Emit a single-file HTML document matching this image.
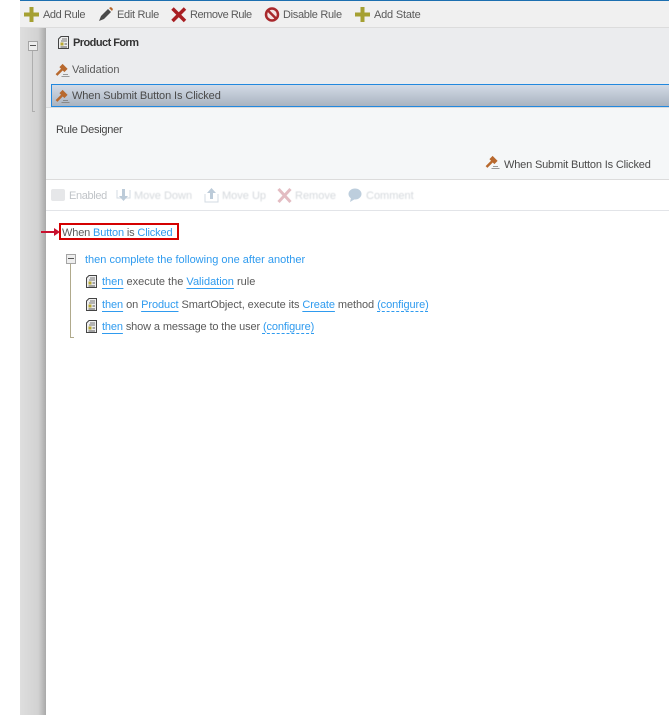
<!DOCTYPE html>
<html><head><meta charset="utf-8"><style>
html,body{margin:0;padding:0;background:#fff}
body{width:669px;height:715px;position:relative;overflow:hidden;font-family:"Liberation Sans",sans-serif;font-size:11px;color:#5a5a5a}
.a{position:absolute}
.t{position:absolute;white-space:nowrap;line-height:14px;letter-spacing:0}
.b{color:#2f9bef}
.u,.d{color:#2f9bef;text-decoration:underline;text-decoration-color:#2f9bef;text-decoration-thickness:1px;text-underline-offset:3px;text-decoration-skip-ink:none}
.d{text-decoration-style:dashed}
svg{position:absolute;overflow:visible}
.dis{color:#d4d8dc;filter:blur(.5px)}
</style></head><body>
<div class="a" style="left:20px;top:27px;width:26px;height:688px;background:linear-gradient(90deg,#dedede 0,#d2d2d2 70%,#b4b4b4 92%,#a8a8a8 100%)"></div>
<div class="a" style="left:20px;top:0;width:649px;height:28px;background:#f0f0f0;border-bottom:1px solid #dcdcdc;box-sizing:border-box"></div>
<div class="a" style="left:20px;top:0;width:649px;height:1px;background:#1c6fb0"></div>
<div class="a" style="left:46px;top:28px;width:623px;height:56px;background:#ebecee"></div>
<div class="a" style="left:46px;top:84px;width:5px;height:23px;background:#ebecee"></div>
<div class="a" style="left:51px;top:84px;width:618px;height:23px;box-sizing:border-box;border:1px solid #2288de;border-right:0;background:linear-gradient(#d3dbe6,#a9b3c0)"></div>
<div class="a" style="left:46px;top:107px;width:623px;height:73px;background:#f5f7f8;border-top:1px solid #d9dbdd;box-sizing:border-box"></div>
<div class="a" style="left:46px;top:179px;width:623px;height:1px;background:#dcdcdc"></div>
<div class="a" style="left:46px;top:210px;width:623px;height:1px;background:#e2e4e8"></div>

<svg style="left:24px;top:7px" width="15" height="15"><path d="M5.500 0h4v5.500H15v4H9.500V15h-4V9.500H0v-4h5.500z" fill="#a5a032"/></svg>
<div class="t" style="left:43px;top:8px;letter-spacing:-.4px">Add Rule</div>
<svg style="left:98px;top:7px" width="16" height="15"><path d="M1 14l2-5 7-7 3 3-7 7z" fill="#4a4a4a"/><path d="M11 1l2-1 2 2-1 2z" fill="#b5662a"/></svg>
<div class="t" style="left:117px;top:8px;letter-spacing:-.3px">Edit Rule</div>
<svg style="left:171px;top:7px" width="16" height="16"><path d="M1.500 1.500L14 14M14 1.500L1.500 14" stroke="#a81e22" stroke-width="3.500" fill="none"/></svg>
<div class="t" style="left:190px;top:8px;letter-spacing:-.45px">Remove Rule</div>
<svg style="left:264px;top:7px" width="16" height="15"><circle cx="8" cy="7.500" r="6" stroke="#a8282c" stroke-width="2.500" fill="#f4e4e4"/><path d="M4 3.500L12 11.500" stroke="#a8282c" stroke-width="2.500"/></svg>
<div class="t" style="left:283px;top:8px;letter-spacing:-.3px">Disable Rule</div>
<svg style="left:355px;top:7px" width="15" height="15"><path d="M5.500 0h4v5.500H15v4H9.500V15h-4V9.500H0v-4h5.500z" fill="#a5a032"/></svg>
<div class="t" style="left:374px;top:8px;letter-spacing:-.2px">Add State</div>

<div class="a" style="left:28px;top:41px;width:8px;height:8px;border:1px solid #a5a5a5;background:#eee"></div>
<div class="a" style="left:30px;top:45px;width:6px;height:1px;background:#555"></div>
<div class="a" style="left:32px;top:51px;width:1px;height:60px;background:#aeaeae"></div>
<div class="a" style="left:32px;top:111px;width:3px;height:1px;background:#aeaeae"></div>

<svg style="left:58px;top:36px" width="11" height="13"><path d="M3 .5H10.500V12.500H.5V3z" fill="#eee" stroke="#444"/><path d="M4 3h5M3 5h6" stroke="#777"/><rect x="2.500" y="6.500" width="3" height="3" fill="#b8a830"/><path d="M6.500 8h2.500M2.500 11h6.500" stroke="#555"/></svg>
<div class="t" style="left:73px;top:36px;font-weight:bold;color:#333;letter-spacing:-.55px">Product Form</div>

<svg style="left:55px;top:63px" width="15" height="14"><path d="M6 2.500L11 7.500" stroke="#b8692e" stroke-width="4.500"/><path d="M7.500 6L1.500 12" stroke="#b8692e" stroke-width="2.500"/><path d="M8 11.500h5M6.500 13.500h8" stroke="#999"/></svg>
<div class="t" style="left:72px;top:63px">Validation</div>
<svg style="left:55px;top:89px" width="15" height="14"><path d="M6 2.500L11 7.500" stroke="#b8692e" stroke-width="4.500"/><path d="M7.500 6L1.500 12" stroke="#b8692e" stroke-width="2.500"/><path d="M8 11.500h5M6.500 13.500h8" stroke="#888"/></svg>
<div class="t" style="left:72px;top:89px;color:#4a4a4a;letter-spacing:-.1px">When Submit Button Is Clicked</div>

<div class="t" style="left:56px;top:123px;color:#444;letter-spacing:-.25px">Rule Designer</div>
<svg style="left:485px;top:155px" width="15" height="14"><path d="M6 2.500L11 7.500" stroke="#b8692e" stroke-width="4.500"/><path d="M7.500 6L1.500 12" stroke="#b8692e" stroke-width="2.500"/><path d="M8 11.500h5M6.500 13.500h8" stroke="#999"/></svg>
<div class="t" style="left:504px;top:158px;color:#4a4a4a;letter-spacing:-.17px">When Submit Button Is Clicked</div>

<div class="a" style="left:51px;top:189px;width:14px;height:12px;background:#e6e7e9;border-radius:2px"></div>
<div class="t" style="left:69px;top:189px;color:#c0c4c8;letter-spacing:-.35px">Enabled</div>
<svg style="left:116px;top:187px" width="15" height="16"><path d="M1 3v8h13V3" stroke="#d3dbe3" fill="none"/><path d="M6 2h3v7h3l-4.500 5L3 9h3z" fill="#bccbd9"/></svg>
<div class="t dis" style="left:134px;top:189px">Move Down</div>
<svg style="left:204px;top:187px" width="15" height="16"><path d="M1 7v8h13V7" stroke="#d3dbe3" fill="none"/><path d="M6 12h3V6h3L7.500 1 3 6h3z" fill="#bccbd9"/></svg>
<div class="t dis" style="left:222px;top:189px">Move Up</div>
<svg style="left:277px;top:188px" width="15" height="15"><path d="M1.500 1L13.500 14M13.500 1L1.500 14" stroke="#e3bcc2" stroke-width="3" fill="none"/></svg>
<div class="t dis" style="left:295px;top:189px">Remove</div>
<svg style="left:348px;top:188px" width="14" height="14"><ellipse cx="7" cy="6" rx="6.500" ry="5.500" fill="#bdcedd"/><path d="M3 10l-1 4 5-3z" fill="#bdcedd"/></svg>
<div class="t dis" style="left:366px;top:189px">Comment</div>

<div class="a" style="left:59px;top:223px;width:120px;height:17px;box-sizing:border-box;border:2px solid #d40000"></div>
<div class="a" style="left:41px;top:231px;width:13px;height:2px;background:#c8102e"></div>
<svg style="left:54px;top:228px" width="6" height="8"><path d="M0 0l6 4-6 4z" fill="#c8102e"/></svg>
<div class="t" style="left:62px;top:226px;letter-spacing:-.15px">When <span class="b">Button</span> is <span class="b">Clicked</span></div>

<div class="a" style="left:66px;top:254px;width:8px;height:8px;border:1px solid #a5a5a5;background:#eee"></div>
<div class="a" style="left:68px;top:258px;width:6px;height:1px;background:#555"></div>
<div class="a" style="left:70px;top:264px;width:1px;height:74px;background:#b0aa8c"></div>
<div class="a" style="left:70px;top:337px;width:4px;height:1px;background:#b0aa8c"></div>
<div class="t b" style="left:85px;top:253px">then complete the following one after another</div>

<svg style="left:86px;top:275px" width="11" height="13"><path d="M3 .5H10.500V12.500H.5V3z" fill="#eee" stroke="#444"/><path d="M4 3h5M3 5h6" stroke="#777"/><rect x="2.500" y="6.500" width="3" height="3" fill="#b8a830"/><path d="M6.500 8h2.500M2.500 11h6.500" stroke="#555"/></svg>
<div class="t" style="left:102px;top:275px"><span class="u">then</span> execute the <span class="u">Validation</span> rule</div>
<svg style="left:86px;top:298px" width="11" height="13"><path d="M3 .5H10.500V12.500H.5V3z" fill="#eee" stroke="#444"/><path d="M4 3h5M3 5h6" stroke="#777"/><rect x="2.500" y="6.500" width="3" height="3" fill="#b8a830"/><path d="M6.500 8h2.500M2.500 11h6.500" stroke="#555"/></svg>
<div class="t" style="left:102px;top:298px;letter-spacing:-.08px"><span class="u">then</span> on <span class="u">Product</span> SmartObject, execute its <span class="u">Create</span> method <span class="d">(configure)</span></div>
<svg style="left:86px;top:320px" width="11" height="13"><path d="M3 .5H10.500V12.500H.5V3z" fill="#eee" stroke="#444"/><path d="M4 3h5M3 5h6" stroke="#777"/><rect x="2.500" y="6.500" width="3" height="3" fill="#b8a830"/><path d="M6.500 8h2.500M2.500 11h6.500" stroke="#555"/></svg>
<div class="t" style="left:102px;top:320px;letter-spacing:-.13px"><span class="u">then</span> show a message to the user <span class="d">(configure)</span></div>
</body></html>
